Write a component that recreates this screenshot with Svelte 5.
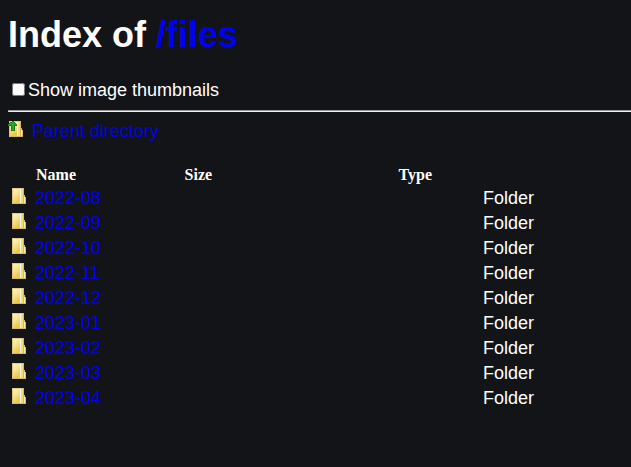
<script>
  const folders = ['2022-08', '2022-09', '2022-10', '2022-11', '2022-12', '2023-01', '2023-02', '2023-03', '2023-04'];
</script>

{#snippet folderIcon(up)}
  <svg class="icon" width="16" height="16" viewBox="0 0 16 16" shape-rendering="crispEdges" aria-hidden="true">
    <defs>
      <linearGradient id="paper" x1="0" y1="0" x2="0.4" y2="1">
        <stop offset="0" stop-color="#fff3ba" />
        <stop offset="0.5" stop-color="#f8e290" />
        <stop offset="1" stop-color="#edc84c" />
      </linearGradient>
    </defs>
    <path d="M1 0H13V7H14V9H15V16H1Z" fill="#dab95e" />
    <path d="M2 1H9V15H2Z" fill="url(#paper)" />
    <path d="M9 1H10V15H9Z" fill="#fffbe2" />
    <path d="M10 1H12V15H10Z" fill="#f4da82" />
    <path d="M12 1H13V15H12Z" fill="#d8b65c" />
    <path d="M13 9H14V15H13Z" fill="#ffeeA0" />
    <path d="M1 0H2V16H1Z" fill="#dfc477" />
    <path d="M1 0H12V1H1Z" fill="#e2cc88" />
    {#if up}
      <path d="M4 0H6V1H7V2H8V3H9V5H7V10H3V5H0V3H1V2H2V1H4Z" fill="#16831a" />
      <path d="M4 1H6V2H7V3H8V4H6V9H4V4H1V3H2V2H4Z" fill="#2ca824" />
    {/if}
  </svg>
{/snippet}

<main>
  <h1>Index of <a href="#files">/files</a></h1>
  <label><input type="checkbox" /><span>Show image thumbnails</span></label>
  <hr />
  <a class="parent" href="#parent">{@render folderIcon(true)}<span>Parent directory</span></a>
  <div class="head">
    <b>Name</b><b>Size</b><b>Type</b>
  </div>
  {#each folders as name}
    <div class="row">
      {@render folderIcon(false)}
      <a href={'#' + name}>{name}</a>
      <span>Folder</span>
    </div>
  {/each}
</main>

<style>
  :global(body) {
    background: #131418;
    overflow: hidden;
  }
  main {
    box-sizing: border-box;
    height: 467px;
    padding: 14px 0 0 8px;
    color: #fff;
    font: 18px/20px "Liberation Sans", Arial, sans-serif;
  }
  h1 {
    margin: 0;
    font-size: 36px;
    line-height: 41px;
  }
  a {
    color: #00e;
    text-decoration: none;
  }
  label {
    display: flex;
    align-items: center;
    height: 20px;
    margin-top: 25px;
  }
  input {
    width: 13px;
    height: 13px;
    margin: 0 3px 2px 4px;
  }
  hr {
    height: 0;
    margin: 10px 0 0;
    border: 1px solid;
    border-color: #9a9a9a #eee #eee #9a9a9a;
    border-right: 0;
  }
  .icon {
    display: block;
    flex: none;
  }
  .parent {
    display: flex;
    height: 20px;
    margin-top: 9px;
  }
  .parent .icon {
    margin-right: 8px;
  }
  .head {
    display: grid;
    grid-template-columns: 148.6px 214px auto;
    margin: 24px 0 0 28px;
    font: 16px/20px "Liberation Serif", "Times New Roman", serif;
  }
  .row {
    display: grid;
    grid-template-columns: 24px 448px auto;
    height: 25px;
    padding-left: 3px;
    line-height: 27px;
  }
  .row .icon {
    margin-top: 3px;
  }
</style>
